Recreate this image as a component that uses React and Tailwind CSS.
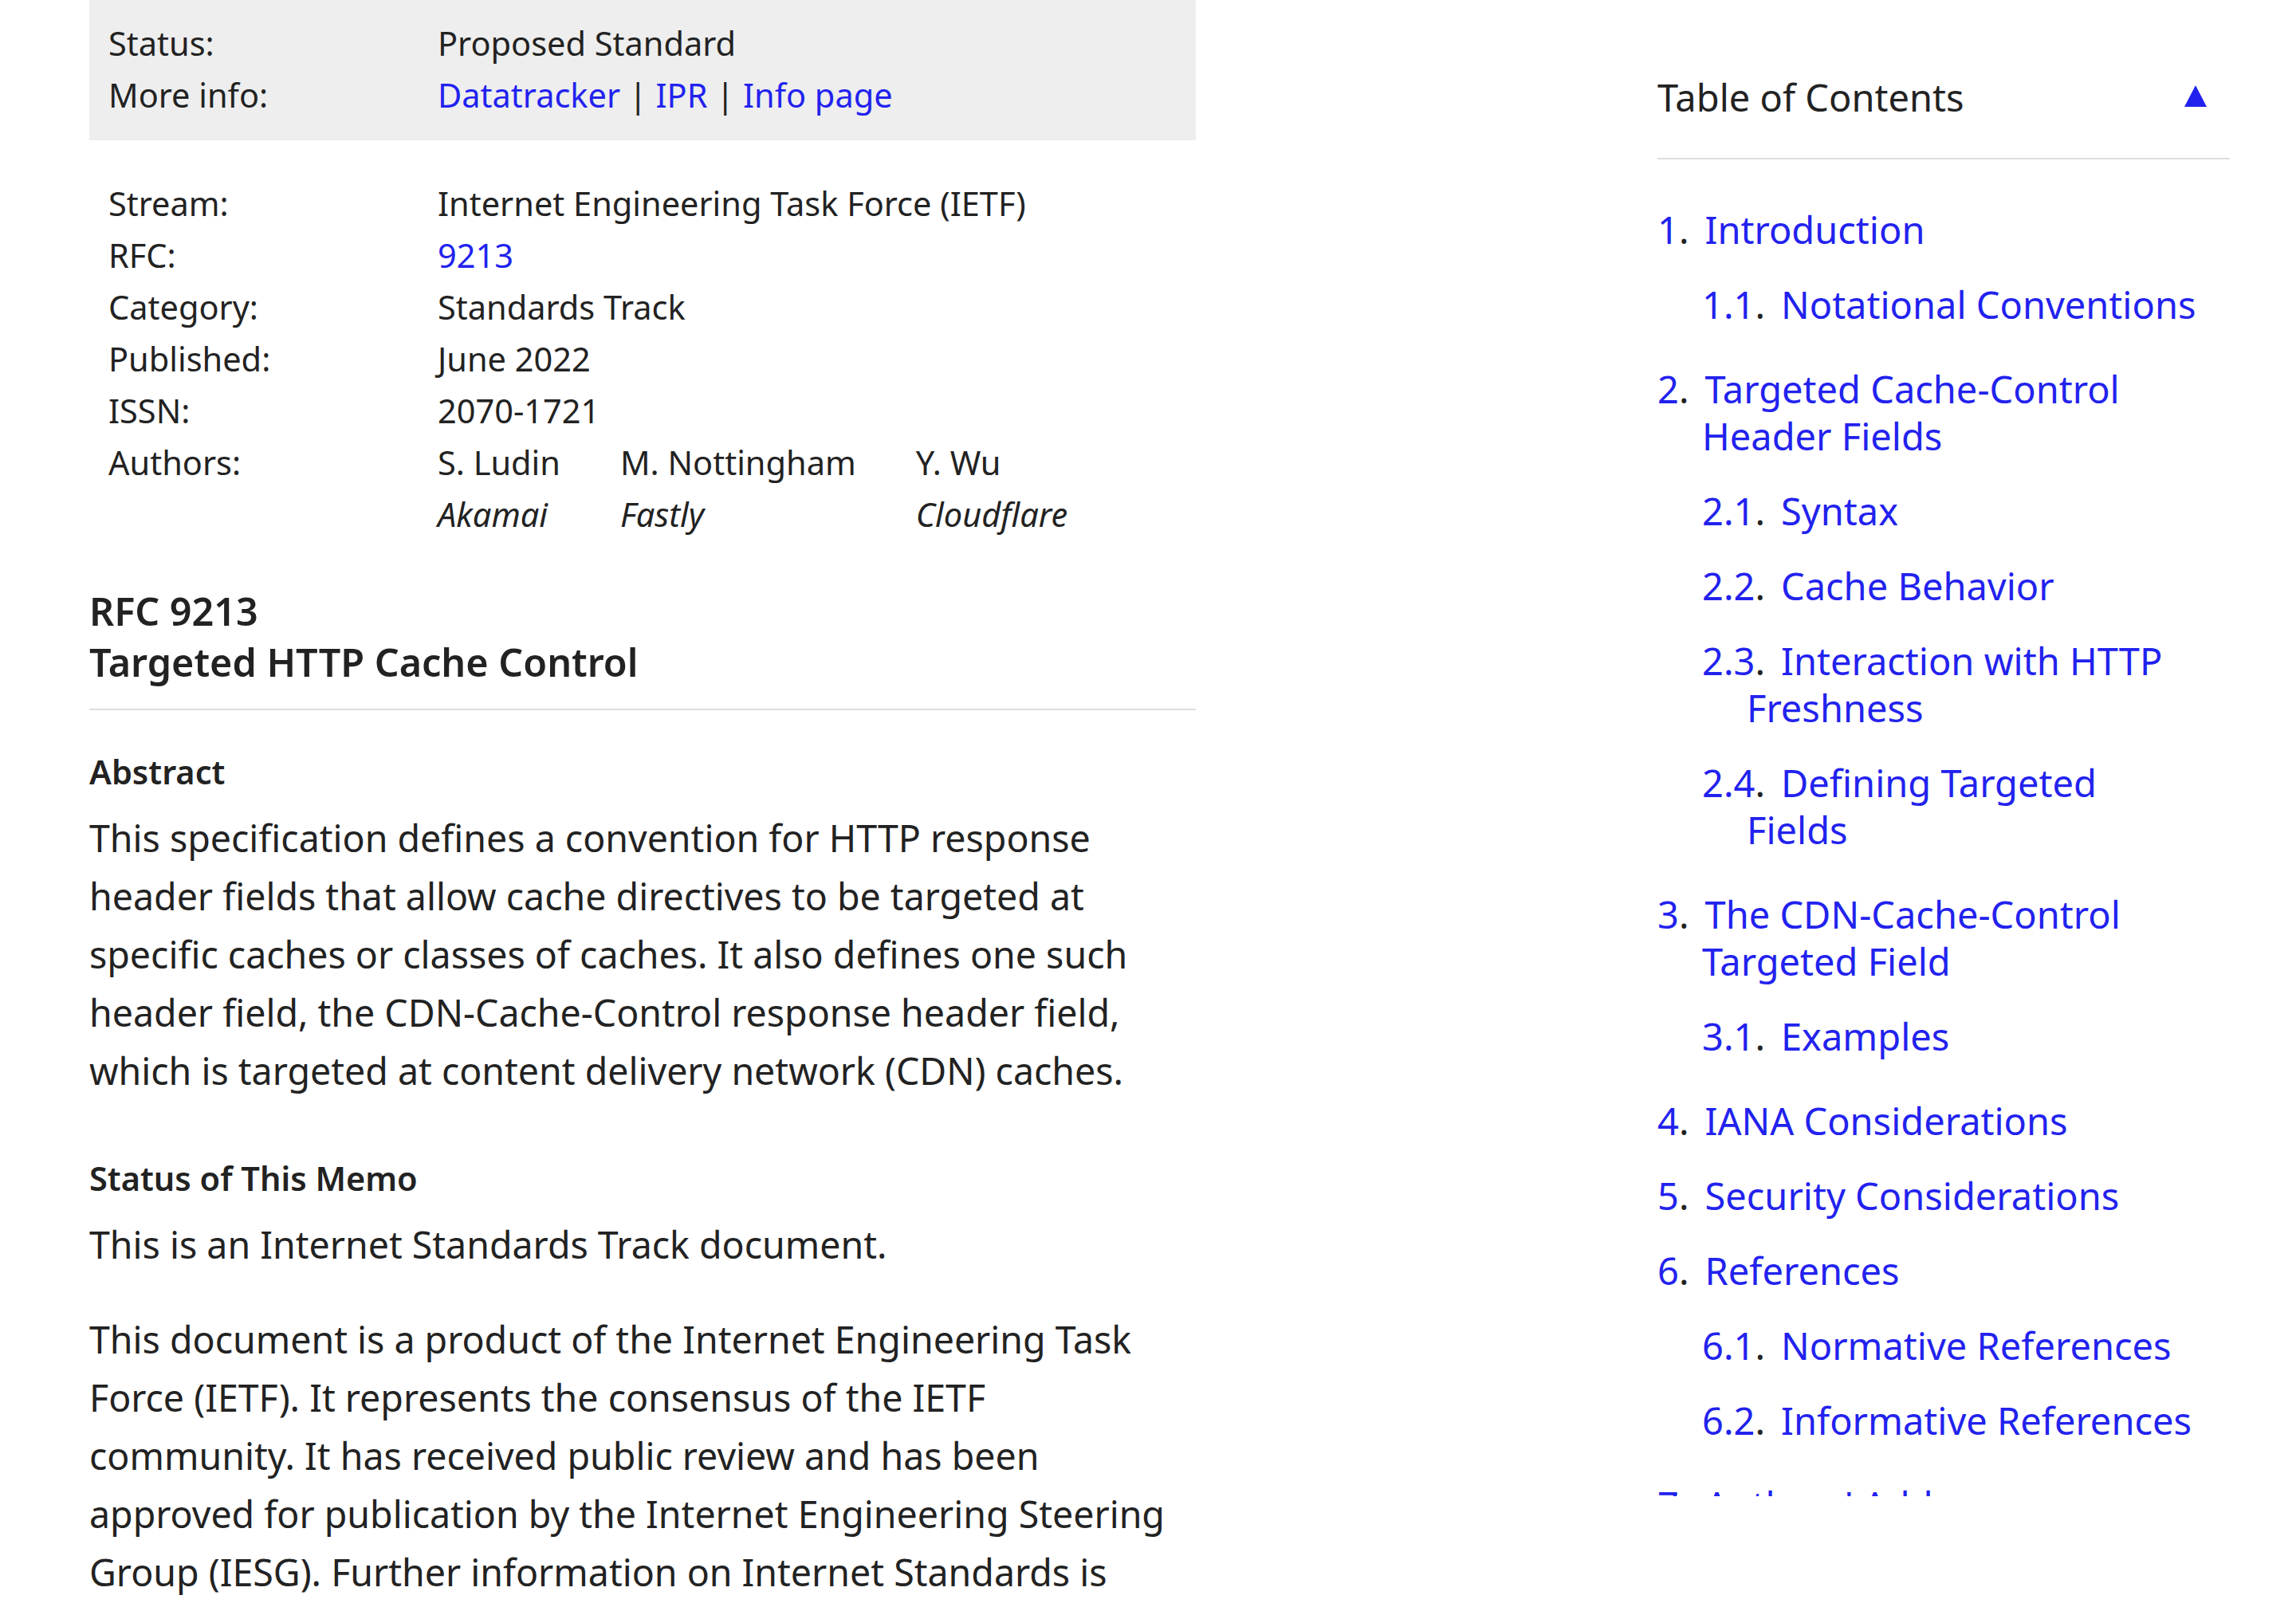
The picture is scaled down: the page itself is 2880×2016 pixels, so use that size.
import React from "react";

const link = "text-[#22e]";

function Row({ label, children }) {
  return (
    <div className="flex">
      <dt className="w-[413px] shrink-0">{label}</dt>
      <dd>{children}</dd>
    </div>
  );
}

function Author({ name, org }) {
  return (
    <div className="mr-[75px]">
      <div>{name}</div>
      <div className="italic">{org}</div>
    </div>
  );
}

function TocItem({ num, title, children }) {
  return (
    <li className={children ? "" : "pb-[35px]"}>
      <div className="pl-[56px] indent-[-56px]">
        <a className={link}>{num}</a>.<a className={`${link} ml-[20px]`}>{title}</a>
      </div>
      {children && <ul className="pl-[56px] pt-[35px] pb-[12px]">{children}</ul>}
    </li>
  );
}

export default function App() {
  return (
    <div className="h-[2016px] overflow-hidden bg-white text-[#222] font-['Noto_Sans',sans-serif]">
      <div className="flex items-start">
        {/* Document body */}
        <main className="ml-[112px] w-[1388px] shrink-0">
          <dl className="bg-[#eee] pl-[24px] pt-[22px] pb-[24px] text-[41.5px] leading-[65px]">
            <Row label="Status:">Proposed Standard</Row>
            <Row label="More info:">
              <a className={link}>Datatracker</a> | <a className={link}>IPR</a> |{" "}
              <a className={link}>Info page</a>
            </Row>
          </dl>

          <dl className="mt-[47px] pl-[24px] text-[41.5px] leading-[65px]">
            <Row label="Stream:">Internet Engineering Task Force (IETF)</Row>
            <Row label="RFC:">
              <a className={link}>9213</a>
            </Row>
            <Row label="Category:">Standards Track</Row>
            <Row label="Published:">June 2022</Row>
            <Row label="ISSN:">2070-1721</Row>
            <Row label="Authors:">
              <div className="flex">
                <Author name="S. Ludin" org="Akamai" />
                <Author name="M. Nottingham" org="Fastly" />
                <Author name="Y. Wu" org="Cloudflare" />
              </div>
            </Row>
          </dl>

          <h1 className="mt-[56px] pb-[27px] border-b-2 border-[#ddd] text-[48.5px] leading-[64px] font-semibold">
            RFC 9213
            <br />
            Targeted HTTP Cache Control
          </h1>

          {/* Abstract */}
          <h2 className="mt-[50px] text-[41.5px] leading-[54px] font-semibold">Abstract</h2>
          <p className="mt-[20px] text-[46.5px] leading-[73px]">
            This specification defines a convention for HTTP response header fields that allow
            cache directives to be targeted at specific caches or classes of caches. It also
            defines one such header field, the CDN-Cache-Control response header field, which is
            targeted at content delivery network (CDN) caches.
          </p>

          {/* Status of This Memo */}
          <h2 className="mt-[71px] text-[41.5px] leading-[54px] font-semibold">Status of This Memo</h2>
          <p className="mt-[20px] text-[46.5px] leading-[73px]">
            This is an Internet Standards Track document.
          </p>
          <p className="mt-[46px] text-[46.5px] leading-[73px]">
            This document is a product of the Internet Engineering Task Force (IETF). It
            represents the consensus of the IETF community. It has received public review and
            has been approved for publication by the Internet Engineering Steering Group (IESG).
            Further information on Internet Standards is available in Section 2 of RFC 7841.
          </p>
        </main>

        {/* Table of contents */}
        <aside className="ml-auto mr-[83px] w-[718px] text-[47px] leading-[59px]">
          <div className="flex items-center justify-between pt-[93px] pb-[46px] pr-[29px] border-b-2 border-[#ddd]">
            <span>Table of Contents</span>
            <svg width="28" height="27" viewBox="0 0 28 27" className="-mt-[4px]">
              <polygon points="14,0 28,27 0,27" fill="#22e" />
            </svg>
          </div>
          <div className="h-[1677px] overflow-hidden pt-[59px]">
            <ul className="w-[679px]">
              <TocItem num="1" title="Introduction">
                <TocItem num="1.1" title="Notational Conventions" />
              </TocItem>
              <TocItem num="2" title="Targeted Cache-Control Header Fields">
                <TocItem num="2.1" title="Syntax" />
                <TocItem num="2.2" title="Cache Behavior" />
                <TocItem num="2.3" title="Interaction with HTTP Freshness" />
                <TocItem num="2.4" title="Defining Targeted Fields" />
              </TocItem>
              <TocItem num="3" title="The CDN-Cache-Control Targeted Field">
                <TocItem num="3.1" title="Examples" />
              </TocItem>
              <TocItem num="4" title="IANA Considerations" />
              <TocItem num="5" title="Security Considerations" />
              <TocItem num="6" title="References">
                <TocItem num="6.1" title="Normative References" />
                <TocItem num="6.2" title="Informative References" />
              </TocItem>
              <TocItem num="7" title="Authors' Addresses" />
            </ul>
          </div>
        </aside>
      </div>
    </div>
  );
}
